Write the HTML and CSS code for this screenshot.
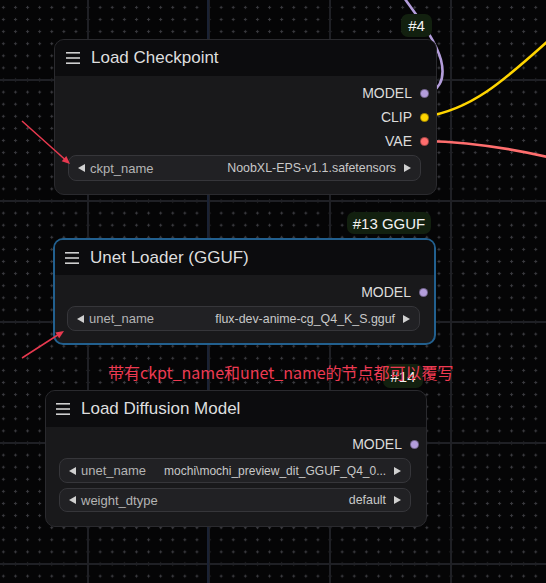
FILE: index.html
```html
<!DOCTYPE html>
<html>
<head>
<meta charset="utf-8">
<link rel="stylesheet" href="styles.css">
</head>
<body>
<div class="canvas">
  <svg class="layer" width="546" height="583" viewBox="0 0 546 583">
    <defs>
      <pattern id="dots" x="-39.05" y="73.95" width="12.1" height="12.1" patternUnits="userSpaceOnUse">
        <rect x="4.6" y="5.55" width="3" height="1" fill="#3a3a3f"/>
        <rect x="5.6" y="4.55" width="1" height="3" fill="#3a3a3f"/>
      </pattern>
      <pattern id="lines" x="-34" y="79" width="121" height="121" patternUnits="userSpaceOnUse">
        <rect x="0" y="0" width="2" height="121" fill="#1f2025"/>
        <rect x="0" y="0" width="121" height="2" fill="#1f2025"/>
      </pattern>
    </defs>
    <rect width="546" height="583" fill="url(#dots)"/>
    <rect width="546" height="583" fill="url(#lines)"/>
    <rect x="207" y="0" width="2" height="583" fill="#1a2234"/>
  </svg>

  <svg class="layer" width="546" height="583" viewBox="0 0 546 583">
    <path d="M424 93 C438 93 446 80 441 60 C435 38 416 15 400 -8" fill="none" stroke="#b39ddb" stroke-width="2.6"/>
    <path d="M424 117 C470 110 500 85 560 30" fill="none" stroke="#ffd500" stroke-width="2.6"/>
    <path d="M424 141 C470 142 520 150 560 160" fill="none" stroke="#ff6e6e" stroke-width="2.6"/>
  </svg>

  <div class="node n1">
    <div class="head">
      <svg class="menu" width="14" height="12" viewBox="0 0 14 12"><rect y="0" width="14" height="1.6"/><rect y="5.2" width="14" height="1.6"/><rect y="10.4" width="14" height="1.6"/></svg>
      <span class="title">Load Checkpoint</span>
    </div>
    <div class="body">
      <div class="out">MODEL<i class="dot model"></i></div>
      <div class="out">CLIP<i class="dot clip"></i></div>
      <div class="out">VAE<i class="dot vae"></i></div>
      <div class="widget">
        <svg class="arr" width="7" height="8" viewBox="0 0 7 8"><polygon points="7,0 7,8 0,4"/></svg>
        <span class="label">ckpt_name</span>
        <span class="value">NoobXL-EPS-v1.1.safetensors</span>
        <svg class="arr" width="7" height="8" viewBox="0 0 7 8"><polygon points="0,0 0,8 7,4"/></svg>
      </div>
    </div>
  </div>

  <div class="node n2">
    <div class="head">
      <svg class="menu" width="14" height="12" viewBox="0 0 14 12"><rect y="0" width="14" height="1.6"/><rect y="5.2" width="14" height="1.6"/><rect y="10.4" width="14" height="1.6"/></svg>
      <span class="title">Unet Loader (GGUF)</span>
    </div>
    <div class="body">
      <div class="out">MODEL<i class="dot model"></i></div>
      <div class="widget">
        <svg class="arr" width="7" height="8" viewBox="0 0 7 8"><polygon points="7,0 7,8 0,4"/></svg>
        <span class="label">unet_name</span>
        <span class="value">flux-dev-anime-cg_Q4_K_S.gguf</span>
        <svg class="arr" width="7" height="8" viewBox="0 0 7 8"><polygon points="0,0 0,8 7,4"/></svg>
      </div>
    </div>
  </div>

  <div class="node n3">
    <div class="head">
      <svg class="menu" width="14" height="12" viewBox="0 0 14 12"><rect y="0" width="14" height="1.6"/><rect y="5.2" width="14" height="1.6"/><rect y="10.4" width="14" height="1.6"/></svg>
      <span class="title">Load Diffusion Model</span>
    </div>
    <div class="body">
      <div class="out">MODEL<i class="dot model"></i></div>
      <div class="widget">
        <svg class="arr" width="7" height="8" viewBox="0 0 7 8"><polygon points="7,0 7,8 0,4"/></svg>
        <span class="label">unet_name</span>
        <span class="value fit">mochi\mochi_preview_dit_GGUF_Q4_0...</span>
        <svg class="arr" width="7" height="8" viewBox="0 0 7 8"><polygon points="0,0 0,8 7,4"/></svg>
      </div>
      <div class="widget w2">
        <svg class="arr" width="7" height="8" viewBox="0 0 7 8"><polygon points="7,0 7,8 0,4"/></svg>
        <span class="label">weight_dtype</span>
        <span class="value">default</span>
        <svg class="arr" width="7" height="8" viewBox="0 0 7 8"><polygon points="0,0 0,8 7,4"/></svg>
      </div>
    </div>
  </div>

  <div class="badge b4">#4</div>
  <div class="badge b13">#13 GGUF</div>
  <div class="badge b14">#14</div>

  <div class="note">带有ckpt_name和unet_name的节点都可以覆写</div>

  <svg class="layer" width="546" height="583" viewBox="0 0 546 583">
    <line x1="22" y1="121" x2="65" y2="159.5" stroke="#e8394f" stroke-width="1.5"/>
    <polygon points="70,164 61.7,161.3 66.3,156.1" fill="#e8394f"/>
    <line x1="22" y1="358" x2="58.5" y2="334.5" stroke="#e8394f" stroke-width="1.5"/>
    <polygon points="64,331 59.2,338.2 55.4,332.4" fill="#e8394f"/>
  </svg>
</div>
</body>
</html>
```

FILE: styles.css
```css
html, body {
  margin: 0;
  padding: 0;
  background: #050506;
}

.canvas {
  position: relative;
  width: 546px;
  height: 583px;
  overflow: hidden;
  background: #050506;
  font-family: "Liberation Sans", Arial, sans-serif;
}

.layer {
  position: absolute;
  left: 0;
  top: 0;
  display: block;
}

.node {
  position: absolute;
  box-sizing: border-box;
  background: #19191b;
  border: 1px solid #2a2a2e;
  border-radius: 10px;
  overflow: hidden;
  display: flex;
  flex-direction: column;
}

.n1 { left: 54px; top: 39px; width: 383px; height: 156px; }
.n2 { left: 53px; top: 238px; width: 383px; height: 107px; border: 2px solid #22608f; }
.n3 { left: 45px; top: 390px; width: 382px; height: 137px; }

.head {
  height: 36px;
  flex: none;
  background: #0c0c0e;
  display: flex;
  align-items: center;
  gap: 11px;
  padding-left: 11px;
  color: #dedede;
  font-size: 17px;
}

.n2 .head { height: 35px; padding-left: 10px; }
.n3 .head { padding-left: 10px; }

.menu { fill: #cfcfcf; flex: none; }

.body {
  display: flex;
  flex-direction: column;
  padding-top: 5px;
}

.out {
  height: 24px;
  display: flex;
  justify-content: flex-end;
  align-items: center;
  gap: 8px;
  padding-right: 7px;
  font-size: 14px;
  color: #dcdcdc;
}

.n2 .out { padding-right: 6px; }

.dot {
  width: 9px;
  height: 9px;
  border-radius: 50%;
  box-sizing: border-box;
  border: 1px solid rgba(0, 0, 0, 0.35);
}
.dot.model { background: #b39ddb; }
.dot.clip { background: #ffd500; }
.dot.vae { background: #ff6e6e; }

.widget {
  margin: 2px 15px 0 13px;
  height: 26px;
  box-sizing: border-box;
  background: #212124;
  border: 1px solid #36363a;
  border-radius: 8px;
  display: flex;
  align-items: center;
  padding: 0 9px;
  font-size: 13px;
  color: #cfcfcf;
}

.n2 .widget { margin: 2px 14px 0 12px; height: 25px; }
.n3 .widget { height: 25px; }
.n3 .widget.w2 { margin-top: 5px; height: 24px; }

.arr { fill: #d0d0d0; flex: none; }

.label {
  margin-left: 5px;
  color: #b4b4b4;
  white-space: nowrap;
}

.value {
  margin-left: auto;
  margin-right: 8px;
  white-space: nowrap;
  color: #c8c8c8;
  font-size: 12.4px;
}

.value.fit {
  margin-left: 18px;
  overflow: hidden;
  font-size: 12px;
}

.badge {
  position: absolute;
  box-sizing: border-box;
  background: #12200f;
  color: #f2f2f2;
  border-radius: 7px;
  font-size: 15px;
  display: flex;
  align-items: center;
  justify-content: center;
}

.b4 { left: 401px; top: 14px; width: 31px; height: 23px; }
.b13 { left: 347px; top: 212px; width: 84px; height: 22px; }
.b14 { left: 383px; top: 364px; width: 40px; height: 24px; }

.note {
  position: absolute;
  left: 108px;
  top: 360px;
  font-family: "Noto Sans CJK SC", "Liberation Sans", sans-serif;
  font-size: 16px;
  line-height: 24px;
  color: #ee3a52;
  white-space: nowrap;
}
```
